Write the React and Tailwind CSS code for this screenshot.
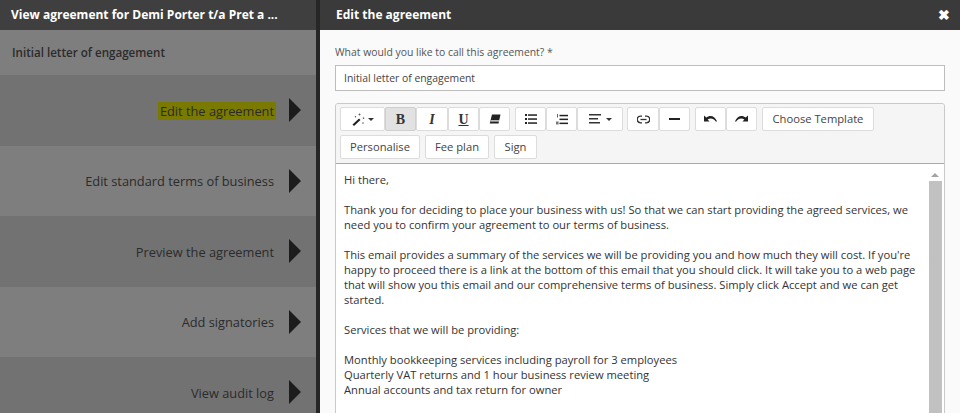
import React from "react";

const font = { fontFamily: '"Open Sans", sans-serif' };
const serif = { fontFamily: '"Liberation Serif", serif' };

function Caret({ cls = "ml-[3px]" }) {
  return <div className={`h-0 w-0 border-x-[3px] border-t-[3px] border-x-transparent border-t-[#333] ${cls}`} />;
}

function Row({ label, bg, h, highlight }) {
  return (
    <div className={`flex items-center justify-end pr-[15px] shrink-0 ${bg} ${h}`}>
      <span className={`text-[12.8px] leading-[18px] text-[#2b2b2b] ${highlight ? "bg-[#7a7a00] px-[2px] -mr-[2px]" : ""}`}>{label}</span>
      <svg width="12" height="24" viewBox="0 0 12 24" className="ml-[15px] -mt-[1px] shrink-0">
        <path d="M0 0 L12 12 L0 24 Z" fill="#1c1c1c" />
      </svg>
    </div>
  );
}

function Btn({ children, w, active }) {
  return (
    <div className={`flex h-[24px] items-center justify-center border rounded-[2px] text-[#333] ${active ? "bg-[#e2e2e2] border-[#cfcfcf]" : "bg-white border-[#dcdcdc]"} ${w}`}>
      {children}
    </div>
  );
}

function TextBtn({ children, w }) {
  return <Btn w={w}><span className="text-[11.2px] leading-none text-[#444]">{children}</span></Btn>;
}

function Wand() {
  return (
    <svg width="13" height="13" viewBox="0 0 13 13">
      <path d="M0.5 11.5 L7 5.5 L8.5 7 L2 13 Z" fill="#222" />
      <path d="M7.5 0.5v2M6.5 1.5h2M11.5 4.5v1.5M10.7 5.2h1.6M3.5 3v1.4M2.8 3.7h1.4M11 9.5v1.2M10.4 10h1.2" stroke="#555" strokeWidth="0.8" fill="none" />
    </svg>
  );
}

function Eraser() {
  return (
    <svg width="12" height="10" viewBox="0 0 12 10">
      <path d="M3 0.5 L11.5 0.5 L9.5 9.5 L0.8 9.5 Z" fill="#222" />
      <path d="M1.8 6.2 L10.4 6.2 L10.1 7.4 L1.5 7.4 Z" fill="#eee" />
    </svg>
  );
}

function ListUl() {
  return (
    <svg width="12" height="10" viewBox="0 0 12 10" fill="#222">
      <rect y="0" width="2" height="2" /><rect y="4" width="2" height="2" /><rect y="8" width="2" height="2" />
      <rect x="3" y="0.3" width="9" height="1.5" /><rect x="3" y="4.3" width="9" height="1.5" /><rect x="3" y="8.3" width="9" height="1.5" />
    </svg>
  );
}

function ListOl() {
  return (
    <svg width="12" height="11" viewBox="0 0 12 11" fill="#222">
      <rect x="1" y="0" width="1" height="3.5" fill="#666" />
      <rect x="0" y="7.5" width="2.6" height="3" fill="#777" />
      <rect x="3.5" y="0.8" width="8.5" height="1.5" /><rect x="3.5" y="4.6" width="8.5" height="1.5" /><rect x="3.5" y="8.6" width="8.5" height="1.5" />
    </svg>
  );
}

function AlignIcon() {
  return (
    <svg width="12" height="10" viewBox="0 0 12 10" fill="#333">
      <rect width="12" height="1.5" /><rect y="4" width="9" height="1.5" /><rect y="8" width="11" height="1.5" />
    </svg>
  );
}

function LinkIcon() {
  return (
    <svg width="13" height="9" viewBox="0 0 13 9" fill="none" stroke="#333" strokeWidth="1.3">
      <path d="M5 1.2H3.6a3.3 3.3 0 0 0 0 6.6H5" />
      <path d="M8 1.2H9.4a3.3 3.3 0 0 1 0 6.6H8" />
      <path d="M3.5 4.5H9.5" />
    </svg>
  );
}

function Undo({ flip }) {
  return (
    <svg width="13" height="8" viewBox="0 0 13 8" className={flip ? "-scale-x-100" : ""}>
      <path d="M0 0.5 L0 6.5 L5.5 6.5 L3.6 4.6 C6 3 9.5 3 12 6.8 L13 6.2 C10.5 0.8 6 -0.5 2.2 2.6 Z" fill="#222" />
    </svg>
  );
}

function Toolbar() {
  return (
    <div className="h-[60px] bg-[#f5f5f5] border-b border-[#a9a9a9] pl-[4px] pt-[3px] rounded-t-[3px]">
      <div className="flex h-[24px]">
        <div className="flex">
          <Btn w="w-[45px]"><Wand /><Caret /></Btn>
          <Btn w="w-[31px]" active><span className="text-[14px] font-bold text-[#333]" style={serif}>B</span></Btn>
          <Btn w="w-[32px]"><span className="text-[14px] font-bold italic text-[#333]" style={serif}>I</span></Btn>
          <Btn w="w-[31px]"><span className="text-[14px] font-bold underline text-[#333]" style={serif}>U</span></Btn>
          <Btn w="w-[31px]"><Eraser /></Btn>
        </div>
        <div className="flex ml-[5px]">
          <Btn w="w-[31px]"><ListUl /></Btn>
          <Btn w="w-[31px]"><ListOl /></Btn>
          <Btn w="w-[46px]"><AlignIcon /><Caret cls="ml-[5px]" /></Btn>
        </div>
        <div className="flex ml-[4px]">
          <Btn w="w-[32px]"><LinkIcon /></Btn>
          <Btn w="w-[31px]"><div className="h-[2px] w-[11px] bg-[#222]" /></Btn>
        </div>
        <div className="flex ml-[5px]">
          <Btn w="w-[31px]"><Undo /></Btn>
          <Btn w="w-[31px]"><Undo flip /></Btn>
        </div>
        <div className="ml-[5px]"><TextBtn w="w-[112px]">Choose Template</TextBtn></div>
      </div>
      <div className="flex mt-[4px] gap-[5px]">
        <TextBtn w="w-[80px]">Personalise</TextBtn>
        <TextBtn w="w-[64px]">Fee plan</TextBtn>
        <TextBtn w="w-[43px]">Sign</TextBtn>
      </div>
    </div>
  );
}

const paragraphs = [
  ["Hi there,"],
  ["Thank you for deciding to place your business with us! So that we can start providing the agreed services, we", "need you to confirm your agreement to our terms of business."],
  ["This email provides a summary of the services we will be providing you and how much they will cost. If you're", "happy to proceed there is a link at the bottom of this email that you should click. It will take you to a web page", "that will show you this email and our comprehensive terms of business. Simply click Accept and we can get", "started."],
  ["Services that we will be providing:"],
  ["Monthly bookkeeping services including payroll for 3 employees", "Quarterly VAT returns and 1 hour business review meeting", "Annual accounts and tax return for owner"],
];

export default function App() {
  return (
    <div className="flex h-[413px] w-[960px] overflow-hidden bg-[#262626]" style={font}>
      <div className="w-[316px] shrink-0 flex flex-col overflow-hidden">
        <div className="h-[30px] shrink-0 bg-[#3f3f3f] pl-[11px] flex items-center text-[12px] font-bold text-white whitespace-nowrap">
          View agreement for Demi Porter t/a Pret a ...
        </div>
        <div className="h-[45px] shrink-0 bg-[#7e7e7e] pl-[12px] pt-[1px] flex items-center text-[11.6px] font-semibold text-[#2b2b2b]">
          Initial letter of engagement
        </div>
        <Row label="Edit the agreement" bg="bg-[#727272]" h="h-[71px]" highlight />
        <Row label="Edit standard terms of business" bg="bg-[#7e7e7e]" h="h-[70px]" />
        <Row label="Preview the agreement" bg="bg-[#727272]" h="h-[71px]" />
        <Row label="Add signatories" bg="bg-[#7e7e7e]" h="h-[70px]" />
        <Row label="View audit log" bg="bg-[#727272]" h="h-[71px]" />
      </div>
      <div className="ml-[4px] flex-1 flex flex-col bg-[#fafafa] min-w-0">
        <div className="h-[30px] bg-[#3a3a3a] flex items-center justify-between pl-[16px] pr-[10px] text-white">
          <span className="text-[12px] font-bold">Edit the agreement</span>
          <span className="text-[14px] font-bold leading-none">✖</span>
        </div>
        <div className="pl-[15px] pr-[15px] flex-1 min-h-0">
          <div className="mt-[15px] text-[10.4px] leading-[14px] text-[#555]">What would you like to call this agreement? *</div>
          <div className="mt-[6px] h-[26px] border border-[#bdbdbd] bg-white pl-[8px] pt-[1px] flex items-center text-[10.4px] text-[#444]">
            Initial letter of engagement
          </div>
          <div className="mt-[12px] border border-[#c9c9c9] rounded-t-[3px] bg-white">
            <Toolbar />
            <div className="relative h-[300px] pl-[8px] pt-[8px] text-[11.2px] leading-[15px] text-[#333] overflow-hidden">
              {paragraphs.map((p, i) => (
                <div key={i} className="mb-[15px] whitespace-nowrap">
                  {p.map((l, j) => <div key={j}>{l}</div>)}
                </div>
              ))}
              <div className="absolute right-[2px] top-0 bottom-0 w-[14px] flex flex-col items-center bg-white">
                <div className="mt-[9px] h-0 w-0 border-x-[4px] border-b-[4px] border-x-transparent border-b-[#a3a3a3]" />
                <div className="mt-[4px] w-[13px] flex-1 bg-[#c1c1c1]" />
              </div>
            </div>
          </div>
        </div>
      </div>
    </div>
  );
}
